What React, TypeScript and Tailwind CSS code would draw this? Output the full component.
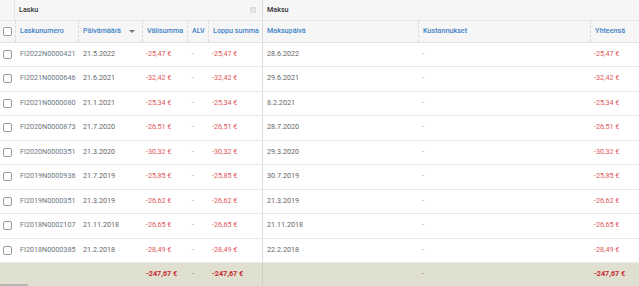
const rows = [
  { no: "FI2022N0000421", date: "21.5.2022", sum: "-25,47 €", paid: "28.6.2022" },
  { no: "FI2021N0000646", date: "21.6.2021", sum: "-32,42 €", paid: "29.6.2021" },
  { no: "FI2021N0000080", date: "21.1.2021", sum: "-25,34 €", paid: "8.2.2021" },
  { no: "FI2020N0000873", date: "21.7.2020", sum: "-26,51 €", paid: "28.7.2020" },
  { no: "FI2020N0000351", date: "21.3.2020", sum: "-30,32 €", paid: "29.3.2020" },
  { no: "FI2019N0000936", date: "21.7.2019", sum: "-25,85 €", paid: "30.7.2019" },
  { no: "FI2019N0000351", date: "21.3.2019", sum: "-26,62 €", paid: "21.3.2019" },
  { no: "FI2018N0002107", date: "21.11.2018", sum: "-26,65 €", paid: "21.11.2018" },
  { no: "FI2018N0000385", date: "21.2.2018", sum: "-28,49 €", paid: "22.2.2018" },
];

const cols = "grid grid-cols-[15px_63px_64px_45px_21px_55px_155px_172px_49px]";

const Checkbox = () => (
  <div className="ml-[3px] h-[9px] w-[9px] rounded-[2px] border border-[#9a9a9a] bg-white" />
);

const HeadCell = ({ label, sort }: { label: string; sort?: boolean }) => (
  <div className="flex items-center border-l border-dashed border-[#dcdcdc] pl-[4px] font-medium text-[#3f83c7]">
    {label}
    {sort && (
      <span className="ml-[8px] h-0 w-0 border-x-[3px] border-t-[3px] border-x-transparent border-t-[#777]" />
    )}
  </div>
);

export default function App() {
  return (
    <div className="relative h-[286px] w-[639px] overflow-hidden bg-white font-['Roboto',sans-serif] text-[7.2px]">
      {/* group header */}
      <div className={`${cols} h-[21px] border-b border-[#e6e6e6] bg-[#f6f6f6]`}>
        <div className="border-r border-[#e4e4e4]" />
        <div className="col-span-5 flex items-center justify-between border-r border-[#dcdcdc] pl-[4px] pr-[6px] font-medium text-[#333]">
          <span>Lasku</span>
          <span className="flex h-[6px] w-[6px] items-center justify-center bg-[#dedede] text-[6px] leading-none text-white">
            +
          </span>
        </div>
        <div className="col-span-3 flex items-center pl-[4px] font-medium text-[#333]">Maksu</div>
      </div>

      {/* column header */}
      <div className={`${cols} h-[21.5px] border-b border-[#e2e2e2] bg-[#f6f6f6]`}>
        <div className="flex items-center">
          <Checkbox />
        </div>
        <HeadCell label="Laskunumero" />
        <HeadCell label="Päivämäärä" sort />
        <HeadCell label="Välisumma" />
        <HeadCell label="ALV" />
        <div className="flex items-center border-x border-[#dcdcdc] pl-[4px] font-medium text-[#3f83c7] [border-left-style:dashed]">
          Loppu summa
        </div>
        <div className="flex items-center pl-[4px] font-medium text-[#3f83c7]">Maksupäivä</div>
        <HeadCell label="Kustannukset" />
        <HeadCell label="Yhteensä" />
      </div>

      {rows.map((r) => (
        <div key={r.no} className={`${cols} h-[24.5px] border-b border-[#e8e8e8]`}>
          <div className="flex items-center">
            <Checkbox />
          </div>
          <div className="flex items-center pl-[5px] text-[#6b7684]">{r.no}</div>
          <div className="flex items-center pl-[5px] text-[#666]">{r.date}</div>
          <div className="flex items-center pl-[4px] text-[#e0585a]">{r.sum}</div>
          <div className="flex items-center pl-[5px] text-[#999]">-</div>
          <div className="flex items-center border-r border-[#dcdcdc] pl-[4px] text-[#e0585a]">{r.sum}</div>
          <div className="flex items-center pl-[4px] text-[#666]">{r.paid}</div>
          <div className="flex items-center pl-[4px] text-[#999]">-</div>
          <div className="flex items-center pl-[4px] text-[#e0585a]">{r.sum}</div>
        </div>
      ))}

      {/* totals */}
      <div className={`${cols} h-[23px] bg-[#e0e0d1]`}>
        <div />
        <div />
        <div />
        <div className="flex items-center pl-[4px] font-bold text-[#c62a2a]">-247,67 €</div>
        <div className="flex items-center pl-[5px] text-[#777]">-</div>
        <div className="flex items-center border-r border-[#cfcfc0] pl-[4px] font-bold text-[#c62a2a]">-247,67 €</div>
        <div />
        <div className="flex items-center pl-[4px] text-[#777]">-</div>
        <div className="flex items-center pl-[4px] font-bold text-[#c62a2a]">-247,67 €</div>
      </div>

      <div className="absolute bottom-0 left-0 h-[2px] w-[28px] rounded-full bg-[#b5b5b5]" />
    </div>
  );
}
